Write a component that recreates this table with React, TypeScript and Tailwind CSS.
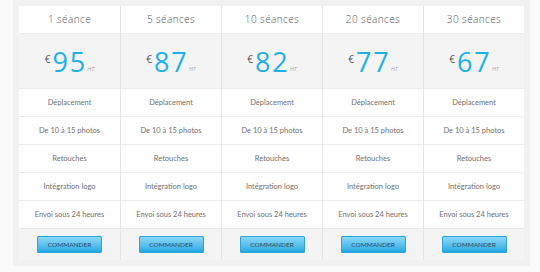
const plans = [
  { label: "1 séance", price: "95" },
  { label: "5 séances", price: "87" },
  { label: "10 séances", price: "82" },
  { label: "20 séances", price: "77" },
  { label: "30 séances", price: "67" },
];

const features = [
  "Déplacement",
  "De 10 à 15 photos",
  "Retouches",
  "Intégration logo",
  "Envoi sous 24 heures",
];

export default function App() {
  return (
    <div className="h-[272px] w-[540px] bg-[#fafafa] font-['Open_Sans',sans-serif]">
      <div className="ml-[13px] w-[517px] bg-[#f1f1f1] p-[6px]">
        <div className="grid grid-cols-5">
          {plans.map((plan, i) => (
            <div
              key={plan.label}
              className={`flex flex-col border-[#e4e4e4] ${i > 0 ? "border-l" : ""}`}
            >
              <div className="flex h-[27px] items-center justify-center bg-white text-[10px] font-light tracking-[0.4px] text-[#555]">
                {plan.label}
              </div>
              <div className="flex h-[55px] items-center justify-center border-t border-[#ececec] bg-[#f4f4f4]">
                <span className="mb-[3px] mr-[2px] text-[10px] text-[#555]">€</span>
                <span className="text-[27px] leading-none tracking-[2px] text-[#1fb0e6]">
                  {plan.price}
                </span>
                <span className="mt-[16px] text-[6px] italic text-[#aaa]">HT</span>
              </div>
              {features.map((f) => (
                <div
                  key={f}
                  className="flex h-[28px] items-center justify-center border-t border-[#ececec] bg-white font-['Lato',sans-serif] text-[7.5px] text-[#707070]"
                >
                  {f}
                </div>
              ))}
              <div className="flex h-[32px] items-center justify-center border-t border-[#e8e8e8] bg-[#f4f4f4]">
                <button
                  type="button"
                  className="h-[17px] w-[65px] rounded-[1px] border border-[#2aa4d9] bg-gradient-to-b from-[#8ad8f7] to-[#1ba9e4] font-['Lato',sans-serif] text-[6.5px] text-[#2a4a5e]"
                >
                  COMMANDER
                </button>
              </div>
            </div>
          ))}
        </div>
      </div>
    </div>
  );
}
